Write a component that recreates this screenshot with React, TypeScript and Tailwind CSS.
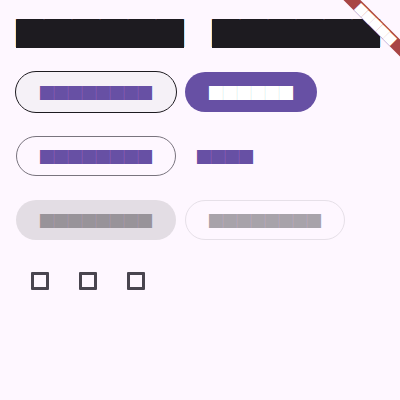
const block = "font-['Noto_Sans_CJK_JP',sans-serif] text-[14px] leading-[14px] whitespace-nowrap";

function Label({ n, color }: { n: number; color: string }) {
  return <span className={`${block} ${color}`}>{"█".repeat(n)}</span>;
}

function Title() {
  return (
    <span className="inline-block w-[168px] h-7 bg-[#1d1b20] font-['Noto_Sans_CJK_JP',sans-serif] text-[28px] leading-[24.9px] text-[#1d1b20] whitespace-nowrap">
      ██████
    </span>
  );
}

function Box() {
  return <span className="w-[18px] h-[18px] border-[3px] border-[#49454f] rounded-[1px]" />;
}

export default function App() {
  return (
    <div className="relative w-[400px] h-[400px] overflow-hidden bg-[#fef7ff]">
      <div className="flex flex-col px-4 pt-5">
        <div className="flex gap-7 h-7">
          <Title />
          <Title />
        </div>

        <div className="mt-6 flex items-center gap-[9px]">
          <button className="flex items-center h-10 px-6 rounded-full bg-[#f5f1f7] outline outline-1 outline-[#1d1b20]">
            <Label n={8} color="text-[#6750a4]" />
          </button>
          <button className="flex items-center h-10 px-6 rounded-full bg-[#6750a4]">
            <Label n={6} color="text-white" />
          </button>
        </div>

        <div className="mt-6 flex items-center gap-[9px]">
          <button className="flex items-center h-10 px-6 rounded-full border border-[#79747e]">
            <span className="-mx-px">
              <Label n={8} color="text-[#6750a4]" />
            </span>
          </button>
          <button className="flex items-center h-10 px-3 rounded-full">
            <Label n={4} color="text-[#6750a4]" />
          </button>
        </div>

        <div className="mt-6 flex items-center gap-[9px]">
          <button disabled className="flex items-center h-10 px-6 rounded-full bg-[#e3dde4]">
            <Label n={8} color="text-[#989399]" />
          </button>
          <button disabled className="flex items-center h-10 px-6 rounded-full border border-[#e6e0e8]">
            <span className="-mx-px">
              <Label n={8} color="text-[#a8a3aa]" />
            </span>
          </button>
        </div>

        <div className="mt-8 flex gap-[30px] pl-[15px]">
          <Box />
          <Box />
          <Box />
        </div>
      </div>

      <svg className="absolute top-0 right-0 pointer-events-none" width="60" height="60" viewBox="340 0 60 60">
        <g transform="translate(400 0) rotate(45)">
          <rect x="-40" y="28" width="80" height="12" fill="#a84545" />
          <text
            x="0"
            y="38.5"
            textAnchor="middle"
            fill="#ffffff"
            fontSize="10.2"
            fontFamily="Noto Sans CJK JP, sans-serif"
          >
            █████
          </text>
        </g>
      </svg>
    </div>
  );
}
